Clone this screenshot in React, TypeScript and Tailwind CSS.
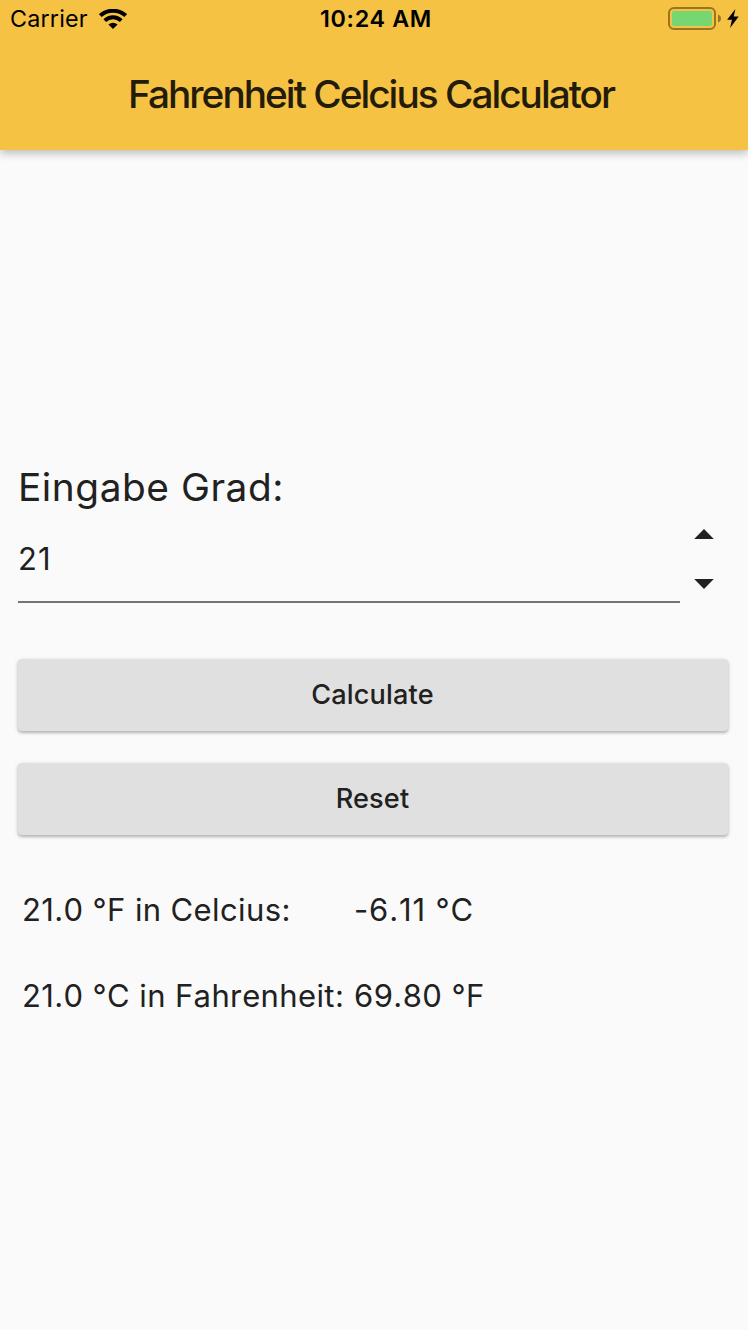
function WifiIcon() {
  return (
    <svg width="28" height="20" viewBox="0 0 28 20" className="shrink-0" aria-hidden="true">
      <g fill="none" stroke="#000" strokeWidth="4">
        <path d="M1.3 6.6C8.4 0.1 19.6 0.1 26.7 6.6" />
        <path d="M5.8 11.6C10.5 7.2 17.5 7.2 22.2 11.6" />
      </g>
      <path d="M9.4 15.6Q14 11.8 18.6 15.6L14 20Z" fill="#000" />
    </svg>
  );
}

function BatteryIcon() {
  return (
    <svg width="54" height="24" viewBox="0 0 54 24" className="shrink-0" aria-hidden="true">
      <rect x="1" y="1" width="46" height="21" rx="5" fill="none" stroke="#977623" strokeWidth="2" />
      <rect x="4" y="4" width="40" height="15" rx="2" fill="#76d672" />
      <path d="M50 7.5C54 8.8 54 14.2 50 15.5Z" fill="#977623" />
    </svg>
  );
}

function BoltIcon() {
  return (
    <svg width="12" height="20" viewBox="0 0 12 20" className="shrink-0" aria-hidden="true">
      <path d="M8.4 0L0.1 10.8H4.9L3.1 19L11.7 7.6H6.7Z" fill="#000" />
    </svg>
  );
}

function StepArrow({ down = false }: { down?: boolean }) {
  return (
    <svg width="20" height="10" viewBox="0 0 20 10" aria-hidden="true">
      <path d={down ? 'M0.2 0H19.8L10 10Z' : 'M0.2 10H19.8L10 0Z'} fill="#212121" />
    </svg>
  );
}

function ActionButton({ label }: { label: string }) {
  return (
    <button className="flex h-[72px] w-full items-center justify-center rounded-[4px] bg-[#e0e0e0] pr-[1px] text-[27.1px] leading-[36px] font-medium tracking-[0.15px] shadow-[0_2px_3px_rgba(0,0,0,0.22),0_1px_5px_rgba(0,0,0,0.12)]">
      {label}
    </button>
  );
}

function ResultRow({ label, value, valueClass }: { label: string; value: string; valueClass: string }) {
  return (
    <div className="flex h-[40px] items-center text-[31px] leading-[40px] whitespace-nowrap [font-kerning:none]">
      <span className="w-[332px] tracking-[0.38px]">{label}</span>
      <span className={valueClass}>{value}</span>
    </div>
  );
}

export default function App() {
  return (
    <div className="flex h-[1330px] w-[748px] flex-col bg-[#fafafa] font-['Inter','Liberation_Sans',sans-serif] text-[#212121]">
      <header className="flex h-[150px] shrink-0 flex-col bg-[#f5c243] shadow-[0_4px_8px_rgba(0,0,0,0.16),0_1px_10px_rgba(0,0,0,0.12)]">
        <div className="grid h-[37px] grid-cols-[1fr_auto_1fr] items-center pr-[9px] pl-[10px] text-[23.3px] leading-[30px] text-black">
          <div className="flex items-center gap-[11px]">
            <span className="tracking-[0.2px]">Carrier</span>
            <WifiIcon />
          </div>
          <span className="pl-[3px] font-semibold tracking-[0.65px]">10:24 AM</span>
          <div className="flex items-center justify-end gap-[5px]">
            <BatteryIcon />
            <BoltIcon />
          </div>
        </div>
        <h1 className="flex h-[113px] items-center justify-center pr-[6px] text-[38.8px] leading-[48px] font-medium tracking-[-2px] text-[#231c0a]">
          Fahrenheit Celcius Calculator
        </h1>
      </header>
      <main className="flex flex-col px-[18px] pt-[313px]">
        <label className="h-[48px] text-[38.8px] leading-[48px] tracking-[0.55px]">Eingabe Grad:</label>
        <div className="flex h-[92px]">
          <div className="flex w-[662px] flex-col justify-end border-b-2 border-[#757575]">
            <span className="mb-[22px] h-[40px] text-[31px] leading-[40px] tracking-[1.2px] [font-kerning:none]">21</span>
          </div>
          <div className="flex w-[48px] flex-col items-center gap-[40px] pt-[18px]">
            <StepArrow />
            <StepArrow down />
          </div>
        </div>
        <div className="mt-[56px] flex w-[710px] flex-col gap-[32px]">
          <ActionButton label="Calculate" />
          <ActionButton label="Reset" />
        </div>
        <div className="mt-[55px] flex flex-col gap-[46px] pl-[4px]">
          <ResultRow label="21.0 °F in Celcius:" value="-6.11 °C" valueClass="tracking-[0.85px]" />
          <ResultRow label="21.0 °C in Fahrenheit:" value="69.80 °F" valueClass="tracking-[0.45px]" />
        </div>
      </main>
    </div>
  );
}
